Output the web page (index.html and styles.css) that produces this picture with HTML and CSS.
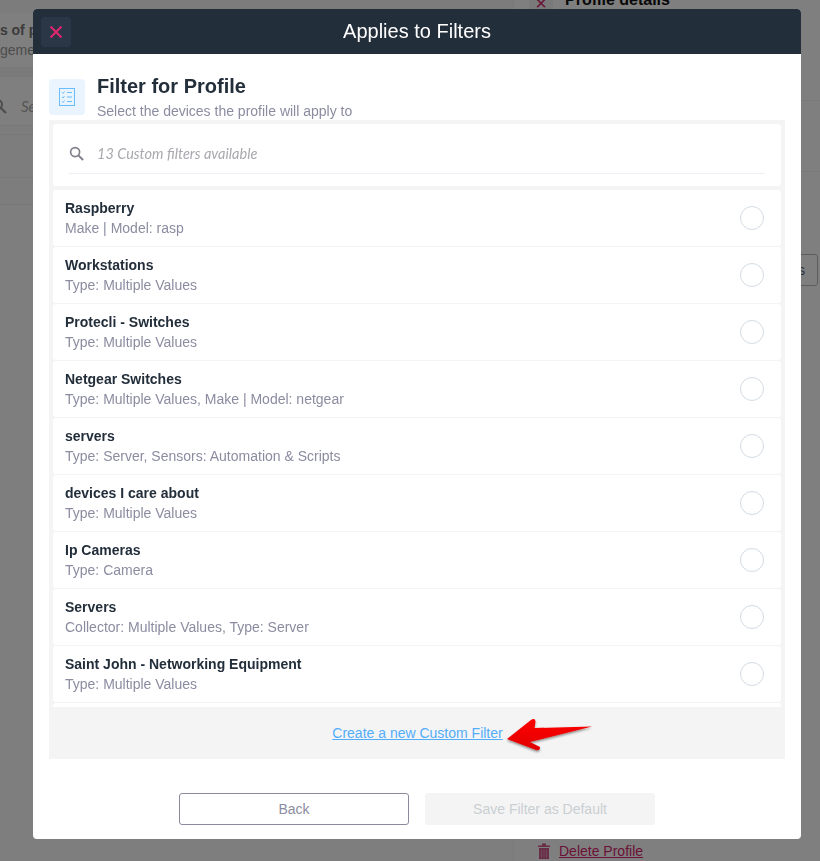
FILE: index.html
```html
<!DOCTYPE html>
<html lang="en">
<head>
  <meta charset="UTF-8">
  <meta name="viewport" content="width=device-width, initial-scale=1.0">
  <title>Applies to Filters</title>
  <link rel="stylesheet" href="styles.css">
</head>
<body>
  <!-- Page behind the dialog -->
  <div class="page">
    <div class="page-left">
      <div class="page-left__head">
        <div class="page-left__title">Lists of profiles</div>
        <div class="page-left__sub">Management</div>
      </div>
      <div class="page-left__search">
        <svg class="page-left__icon" width="16" height="16" viewBox="0 0 16 16"><circle cx="6.500" cy="6.500" r="4.500" fill="none" stroke="currentColor" stroke-width="2"/><path d="M10 10l5 5" stroke="currentColor" stroke-width="2.200"/></svg>
        <span>Search</span>
      </div>
      <div class="page-left__row page-left__row--gap"></div>
      <div class="page-left__row page-left__row--big"></div>
      <div class="page-left__row page-left__row--small"></div>
    </div>
    <div class="page-right">
      <div class="page-right__head">
        <span class="page-right__close">&times;</span>
        <span class="page-right__title">Profile details</span>
      </div>
      <div class="page-right__section page-right__section--first"></div>
      <div class="page-right__section"></div>
      <div class="page-right__action"><span class="page-right__btn">Filters</span></div>
      <div class="page-right__delete">
        <svg class="page-right__trash" width="12" height="16" viewBox="0 0 12 16"><path d="M0 2.500h12v1.500H0zM4 .5h4v2H4zM1 5h10v11H1z" fill="currentColor"/><path d="M3.500 6.500v8M6 6.500v8M8.500 6.500v8" stroke="#fff" stroke-opacity="0.350" stroke-width="1"/></svg>
        <a class="page-right__link">Delete Profile</a>
      </div>
    </div>
  </div>

  <div class="overlay"></div>

  <div class="modal">
    <div class="modal__header">
      <button class="modal__close">
        <svg width="12" height="12" viewBox="0 0 12 12"><path d="M.5 .5l11 11M11.500 .5l-11 11" stroke="#d9286f" stroke-width="2.200"/></svg>
      </button>
      <div class="modal__title">Applies to Filters</div>
    </div>

    <div class="intro">
      <div class="intro__icon">
        <svg width="16" height="18" viewBox="0 0 16 18" fill="none" stroke="#69bdfb" stroke-width="1">
          <rect x="0.500" y="0.500" width="15" height="17"/>
          <path d="M3 4.500l1 1 1.500-2M3 9l1 1 1.500-2M3 13.500l1 1 1.500-2M8 4.500h5M8 9h5M8 13.500h5"/>
        </svg>
      </div>
      <div>
        <h2 class="intro__title">Filter for Profile</h2>
        <p class="intro__sub">Select the devices the profile will apply to</p>
      </div>
    </div>

    <div class="panel">
      <div class="search">
        <div class="search__field">
          <svg width="15" height="15" viewBox="0 0 16 16" fill="none" stroke="#80808a"><circle cx="6.500" cy="6.500" r="4.800" stroke-width="1.800"/><path d="M10 10l5 5" stroke-width="2.200"/></svg>
          <span class="search__text">13 Custom filters available</span>
        </div>
      </div>

      <div class="list">
        <div class="item">
          <div><div class="item__name">Raspberry</div><div class="item__info">Make | Model: rasp</div></div>
          <span class="item__radio"></span>
        </div>
        <div class="item">
          <div><div class="item__name">Workstations</div><div class="item__info">Type: Multiple Values</div></div>
          <span class="item__radio"></span>
        </div>
        <div class="item">
          <div><div class="item__name">Protecli - Switches</div><div class="item__info">Type: Multiple Values</div></div>
          <span class="item__radio"></span>
        </div>
        <div class="item">
          <div><div class="item__name">Netgear Switches</div><div class="item__info">Type: Multiple Values, Make | Model: netgear</div></div>
          <span class="item__radio"></span>
        </div>
        <div class="item">
          <div><div class="item__name">servers</div><div class="item__info">Type: Server, Sensors: Automation &amp; Scripts</div></div>
          <span class="item__radio"></span>
        </div>
        <div class="item">
          <div><div class="item__name">devices I care about</div><div class="item__info">Type: Multiple Values</div></div>
          <span class="item__radio"></span>
        </div>
        <div class="item">
          <div><div class="item__name">Ip Cameras</div><div class="item__info">Type: Camera</div></div>
          <span class="item__radio"></span>
        </div>
        <div class="item">
          <div><div class="item__name">Servers</div><div class="item__info">Collector: Multiple Values, Type: Server</div></div>
          <span class="item__radio"></span>
        </div>
        <div class="item">
          <div><div class="item__name">Saint John - Networking Equipment</div><div class="item__info">Type: Multiple Values</div></div>
          <span class="item__radio"></span>
        </div>
        <div class="item"></div>
      </div>

      <div class="panel__footer">
        <a class="panel__link">Create a new Custom Filter</a>
        <svg class="arrow" width="90" height="40" viewBox="0 0 90 40">
          <defs>
            <linearGradient id="arrow-fill" x1="0" y1="0" x2="0" y2="1">
              <stop offset="0" stop-color="#ff0000"/>
              <stop offset="1" stop-color="#e00000"/>
            </linearGradient>
            <filter id="arrow-shadow" x="-10%" y="-20%" width="120%" height="150%"><feDropShadow dx="0" dy="1.500" stdDeviation="1" flood-color="#000" flood-opacity="0.450"/></filter>
          </defs>
          <path d="M1 23L25 4Q29 1.500 29.500 5.500L28.500 12L86 10.500L24 26L34 31Q34 35 30 34Z" fill="url(#arrow-fill)" filter="url(#arrow-shadow)"/>
        </svg>
      </div>
    </div>

    <div class="actions">
      <button class="btn btn--back">Back</button>
      <button class="btn btn--save">Save Filter as Default</button>
    </div>
  </div>
</body>
</html>
```

FILE: styles.css
```css
* {
  margin: 0;
  padding: 0;
  box-sizing: border-box;
}

html,
body {
  height: 100%;
  overflow: hidden;
}

body {
  font-family: "Liberation Sans", Arial, sans-serif;
  background-color: #fff;
  color: #232e3b;
}

/* Page behind the dialog */
.page {
  display: flex;
  height: 100%;
}

.page-left {
  width: 513px;
  flex-shrink: 0;
  overflow: hidden;
  background-color: #fdfdfd;
}

.page-left__head {
  height: 77px;
  padding-top: 8px;
  border-top: 13px solid #f8f8f8;
  border-bottom: 10px solid #f4f4f4;
  background-color: #fff;
}

.page-left__title {
  margin-left: -25px;
  font-size: 14px;
  font-weight: bold;
  line-height: 18px;
  color: #777;
}

.page-left__sub {
  margin-left: -35px;
  font-size: 14px;
  line-height: 22px;
  color: #999;
}

.page-left__search {
  display: flex;
  align-items: center;
  gap: 14px;
  height: 49px;
  margin-left: -9px;
  padding-top: 10px;
  border-bottom: 1px solid #f0f0f0;
  font-family: "Lato", sans-serif;
  font-style: italic;
  font-size: 15px;
  color: #aaa;
  background-color: #fff;
}

.page-left__icon {
  color: #999;
}

.page-left__row {
  border-bottom: 1px solid #f0f0f0;
  background-color: #fbfbfb;
}

.page-left__row--gap {
  height: 9px;
}

.page-left__row--big {
  height: 43px;
}

.page-left__row--small {
  height: 27px;
  margin-bottom: 8px;
}

.page-right {
  flex: 1;
  background-color: #fff;
  border-left: 1px solid #f4f4f4;
}

.page-right__head {
  display: flex;
  align-items: center;
  gap: 12px;
  margin-top: -9px;
  padding-left: 15px;
  height: 24px;
}

.page-right__close {
  width: 24px;
  height: 24px;
  text-align: center;
  font-size: 20px;
  line-height: 24px;
  color: #d6246e;
  background-color: #f4f4f4;
}

.page-right__title {
  margin-top: -6px;
  font-size: 16px;
  font-weight: bold;
  color: #111;
}

.page-right__section {
  height: 71px;
  border-bottom: 1px solid #f4f4f4;
}

.page-right__section--first {
  height: 86px;
}

.page-right__action {
  display: flex;
  justify-content: flex-end;
  margin-top: 82px;
  padding-right: 2px;
}

.page-right__btn {
  display: block;
  width: 80px;
  height: 32px;
  line-height: 30px;
  padding-right: 12px;
  text-align: right;
  font-size: 14px;
  color: #5b6478;
  border: 1px solid #bbb;
  border-radius: 3px;
}

.page-right__delete {
  display: flex;
  align-items: center;
  gap: 9px;
  margin-top: 557px;
  padding-left: 24px;
  font-size: 14px;
  color: #d6246e;
}

.page-right__trash {
  color: #d45a8c;
}

.page-right__link {
  text-decoration: underline;
}

.overlay {
  position: fixed;
  top: 0;
  left: 0;
  right: 0;
  bottom: 0;
  background-color: rgba(0, 0, 0, 0.5);
}

/* Dialog */
.modal {
  position: fixed;
  top: 9px;
  left: 33px;
  width: 768px;
  height: 830px;
  display: flex;
  flex-direction: column;
  background-color: #fff;
  border-radius: 4px;
  overflow: hidden;
}

.modal__header {
  flex-shrink: 0;
  display: flex;
  align-items: center;
  height: 45px;
  padding: 0 8px;
  background-color: #232e3b;
}

.modal__close {
  flex-shrink: 0;
  display: flex;
  align-items: center;
  justify-content: center;
  width: 30px;
  height: 30px;
  border: none;
  border-radius: 4px;
  background-color: #2b3747;
}

.modal__title {
  flex: 1;
  padding-right: 30px;
  text-align: center;
  font-size: 20px;
  color: #fff;
}

.intro {
  flex-shrink: 0;
  display: flex;
  gap: 12px;
  height: 66px;
  padding: 20px 16px 0;
}

.intro__icon {
  flex-shrink: 0;
  display: flex;
  align-items: center;
  justify-content: center;
  width: 36px;
  height: 36px;
  margin-top: 5px;
  border-radius: 4px;
  background-color: #eaf4ff;
}

.intro__title {
  font-size: 20px;
  line-height: 24px;
  font-weight: bold;
}

.intro__sub {
  margin-top: 5px;
  font-size: 14px;
  line-height: 16px;
  color: #8b8ca0;
}

.panel {
  flex-shrink: 0;
  margin: 0 16px;
  height: 639px;
  padding-top: 4px;
  display: flex;
  flex-direction: column;
  background-color: #f4f4f4;
}

.search {
  flex-shrink: 0;
  height: 62px;
  margin: 0 4px 4px;
  padding: 0 16px 0 16px;
  background-color: #fff;
  border-radius: 3px;
}

.search__field {
  display: flex;
  align-items: center;
  gap: 13px;
  height: 50px;
  border-bottom: 1px solid #eceff3;
  padding-top: 10px;
}

.search__text {
  font-family: "Lato", sans-serif;
  font-style: italic;
  font-size: 14.500px;
  color: #a8a8ae;
}

.list {
  flex: 1;
  margin: 0 4px;
  overflow: hidden;
}

.item {
  display: flex;
  align-items: center;
  justify-content: space-between;
  height: 56px;
  margin-bottom: 1px;
  padding: 0 17px 0 12px;
  background-color: #fff;
  border-radius: 3px;
}

.item__name {
  font-size: 14px;
  line-height: 20px;
  font-weight: bold;
}

.item__info {
  font-size: 14px;
  line-height: 20px;
  color: #8b8ca0;
}

.item__radio {
  width: 24px;
  height: 24px;
  border: 1px solid #d3dbe3;
  border-radius: 50%;
}

.panel__footer {
  flex-shrink: 0;
  position: relative;
  height: 52px;
  display: flex;
  align-items: center;
  justify-content: center;
  padding-left: 1px;
  background-color: #f4f4f4;
}

.panel__link {
  font-size: 14px;
  color: #52adfb;
  text-decoration: underline;
}

.arrow {
  position: absolute;
  left: 457px;
  top: 9px;
}

.actions {
  display: flex;
  justify-content: center;
  gap: 16px;
  padding-top: 34px;
}

.btn {
  width: 230px;
  height: 32px;
  font-family: "Liberation Sans", Arial, sans-serif;
  font-size: 14px;
  border-radius: 3px;
}

.btn--back {
  color: #8b8ca0;
  background-color: #fff;
  border: 1px solid #8b8a9c;
}

.btn--save {
  color: #c9cfd3;
  background-color: #f4f4f4;
  border: none;
}
```
